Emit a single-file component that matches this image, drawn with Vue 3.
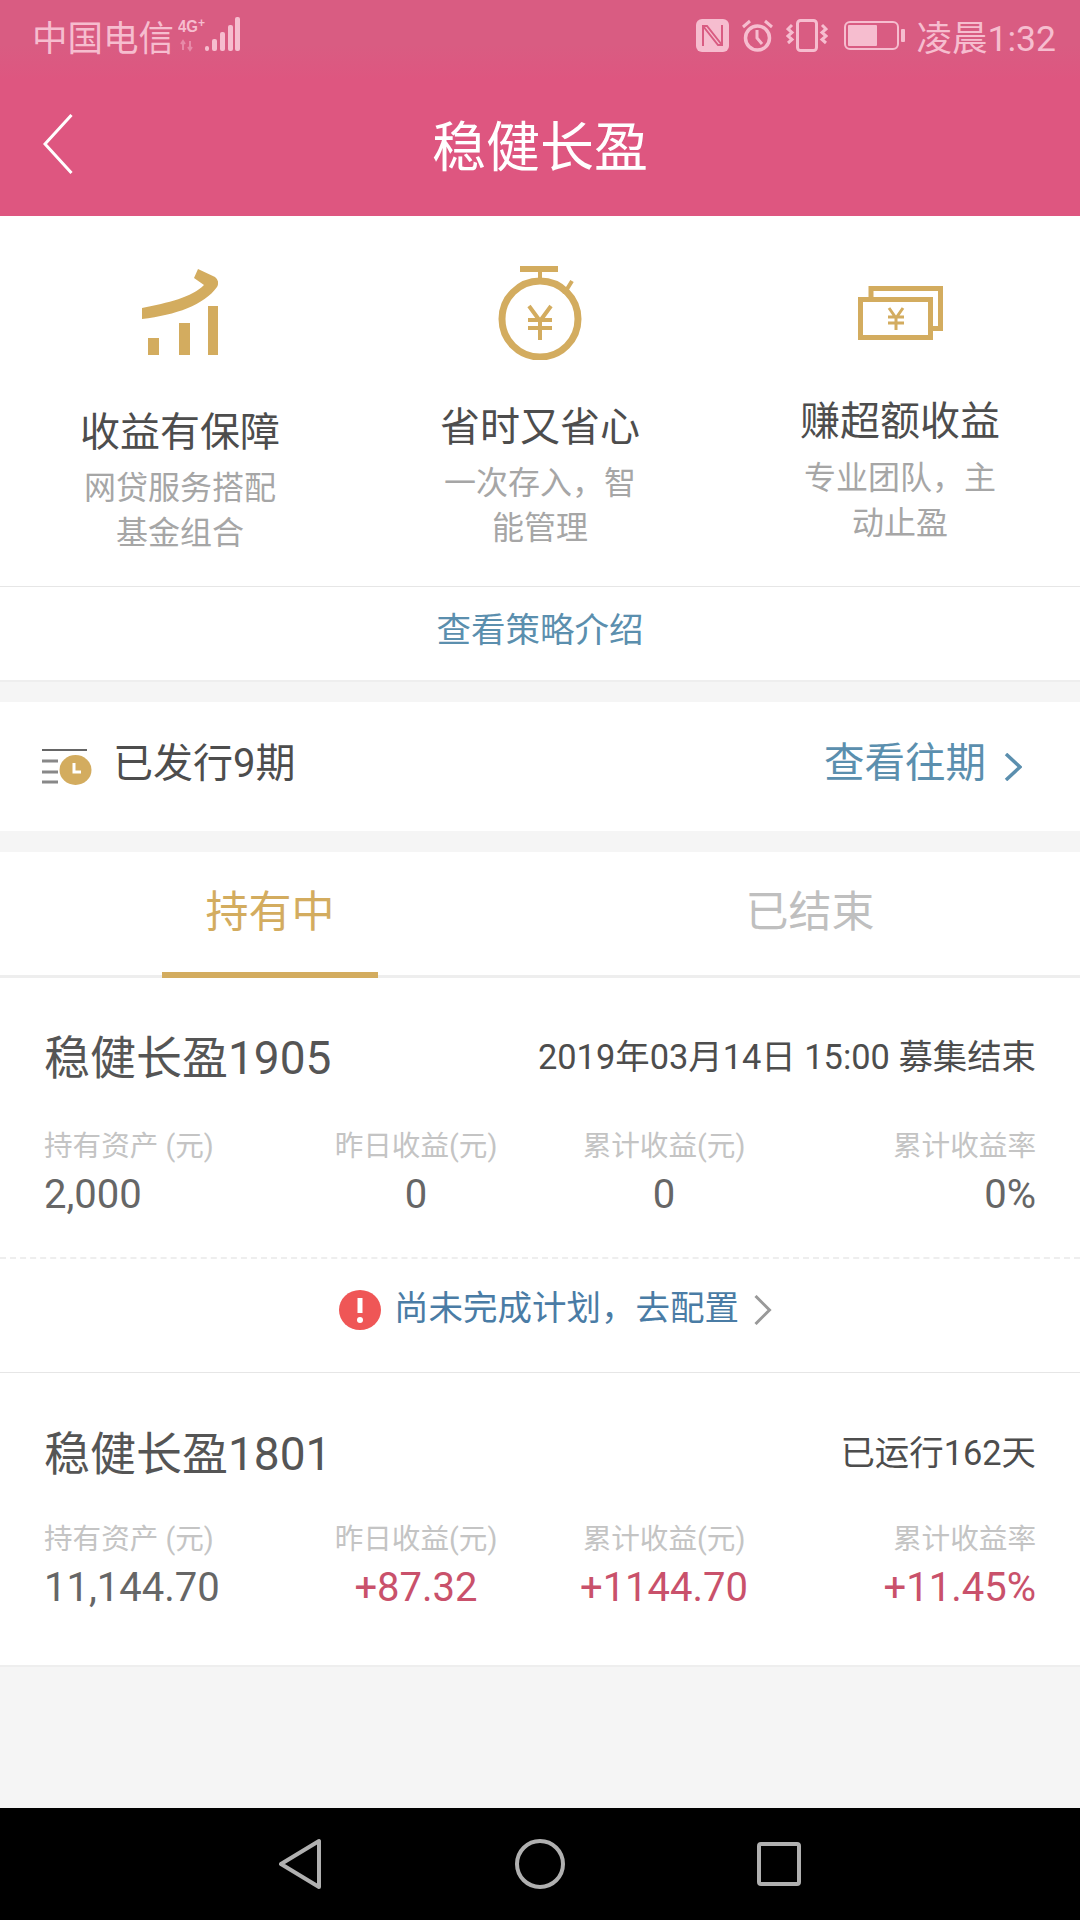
<template>
  <div class="page">
    <header class="top">
      <div class="status">
        <div class="status-left">
          <span class="carrier">中国电信</span>
          <svg class="signal" width="62" height="36" viewBox="0 0 62 36">
            <text x="0" y="15" class="net" textLength="20" lengthAdjust="spacingAndGlyphs">4G</text>
            <text x="20" y="10" class="net-plus">+</text>
            <path d="M5 24v9M3 27l2-3 2 3M12 33v-9M10 30l2 3 2-3" stroke="#e78aa8" stroke-width="2" fill="none" />
            <rect x="27" y="29" width="4" height="5" rx="2" fill="#f6bdcf" />
            <rect x="34" y="22" width="5" height="12" rx="2" fill="#f6bdcf" />
            <rect x="42" y="15" width="5" height="19" rx="2" fill="#f6bdcf" />
            <rect x="50" y="8" width="5" height="26" rx="2" fill="#f6bdcf" />
            <rect x="57" y="0" width="5" height="34" rx="2" fill="#f6bdcf" />
          </svg>
        </div>
        <div class="status-right">
          <svg width="33" height="33" viewBox="0 0 33 33">
            <rect width="33" height="33" rx="6" fill="#f6bdcf" />
            <path d="M7 27V7h4l15 19M26 6v20h-4L7 7" stroke="#d95c82" stroke-width="2" fill="none" />
          </svg>
          <svg width="33" height="33" viewBox="0 0 33 33" fill="none" stroke="#f6bdcf" stroke-width="3.500">
            <circle cx="16.500" cy="19" r="12" />
            <path d="M16 11v8l5 6" stroke-width="3" />
            <path d="M2 8l7-6M31 8l-7-6" stroke-width="3" />
          </svg>
          <svg width="42" height="33" viewBox="0 0 42 33" fill="none" stroke="#f6bdcf" stroke-width="3">
            <rect x="11.500" y="1.500" width="19" height="30" rx="3" />
            <path d="M6 6L2 10l4 3.500L2 17l4 3.500L2 24M36 6l4 4-4 3.500 4 3.500-4 3.500 4 3.500" />
          </svg>
          <svg class="battery" width="61" height="29" viewBox="0 0 61 29">
            <rect x="1" y="1" width="53" height="27" rx="5" fill="none" stroke="#f6bdcf" stroke-width="2" />
            <rect x="4" y="4" width="29" height="21" rx="1" fill="#f6bdcf" />
            <rect x="57" y="8" width="4" height="13" rx="1" fill="#f6bdcf" />
          </svg>
          <span class="clock">凌晨1:32</span>
        </div>
      </div>
      <div class="nav">
        <svg class="back" width="30" height="60" viewBox="0 0 30 60" fill="none" stroke="#fff" stroke-width="3">
          <path d="M28.500 1L2 30l26.500 29" />
        </svg>
        <span class="nav-title">稳健长盈</span>
      </div>
    </header>

    <section class="intro">
      <div class="features">
        <div class="feature f1">
          <svg width="76" height="86" viewBox="0 0 76 86" fill="#d3ac5f">
            <path d="M0 39C26 34 50 28 62 16L52 9 56 0 73 8Q78 12 75 18C62 36 34 46 0 50z" />
            <rect x="6" y="69" width="11" height="17" />
            <rect x="37" y="54" width="11" height="32" />
            <rect x="66" y="37" width="10" height="49" />
          </svg>
          <h3>收益有保障</h3>
          <p>网贷服务搭配<br />基金组合</p>
        </div>
        <div class="feature f2">
          <svg width="84" height="94" viewBox="0 0 84 94" fill="none" stroke="#d3ac5f">
            <path d="M22 3h38" stroke-width="6" />
            <path d="M42 3v11M66 28l8-13" stroke-width="4" />
            <circle cx="42" cy="53" r="38" stroke-width="7" />
            <path d="M31 40l11 15 11-15M30 54h24M30 62h24M42 54v20" stroke-width="4" />
          </svg>
          <h3>省时又省心</h3>
          <p>一次存入，智<br />能管理</p>
        </div>
        <div class="feature f3">
          <svg width="85" height="54" viewBox="0 0 85 54" fill="none" stroke="#d3ac5f" stroke-width="5">
            <path d="M13 11V2.500h69.500v40H73" />
            <rect x="2.500" y="13.500" width="70" height="38" />
            <path d="M31 22l7 10 7-10M30 31h16M30 37h16M38 32v12" stroke-width="3" />
          </svg>
          <h3>赚超额收益</h3>
          <p>专业团队，主<br />动止盈</p>
        </div>
      </div>
      <div class="strategy">查看策略介绍</div>
    </section>

    <section class="issue">
      <div class="issue-left">
        <svg width="50" height="38" viewBox="0 0 50 38">
          <path d="M0 2h45" stroke="#666" stroke-width="2" fill="none" />
          <path d="M0 13h16M0 24h16M0 34h16" stroke="#888" stroke-width="3" fill="none" />
          <ellipse cx="33.500" cy="22" rx="16" ry="15" fill="#d3ac5f" />
          <path d="M32 15v9h7" stroke="#fff" stroke-width="3" fill="none" />
        </svg>
        <span>已发行9期</span>
      </div>
      <div class="issue-right">
        <span>查看往期</span>
        <svg width="18" height="28" viewBox="0 0 18 28" fill="none" stroke="#5b8fae" stroke-width="3.500">
          <path d="M2 1l14 13L2 27" />
        </svg>
      </div>
    </section>

    <div class="tabs">
      <div class="tab active"><span>持有中</span></div>
      <div class="tab"><span>已结束</span></div>
    </div>

    <section class="list">
      <div class="plan first">
        <div class="plan-head">
          <span class="plan-name">稳健长盈1905</span>
          <span class="plan-note">2019年03月14日 15:00 募集结束</span>
        </div>
        <div class="stats">
          <div class="stat" v-for="item in holding" :key="item.label">
            <div class="stat-label">{{ item.label }}</div>
            <div class="stat-value">{{ item.value }}</div>
          </div>
        </div>
      </div>
      <div class="alert">
        <svg class="alert-icon" width="42" height="40" viewBox="0 0 42 40">
          <ellipse cx="21" cy="20" rx="21" ry="20" fill="#ef5656" />
          <path d="M21 8v15" stroke="#fff" stroke-width="5" />
          <circle cx="21" cy="30" r="3" fill="#fff" />
        </svg>
        <span>尚未完成计划，去配置</span>
        <svg width="18" height="30" viewBox="0 0 18 30" fill="none" stroke="#999" stroke-width="3">
          <path d="M1.500 1l14 14-14 14" />
        </svg>
      </div>
      <div class="plan second">
        <div class="plan-head">
          <span class="plan-name">稳健长盈1801</span>
          <span class="plan-note">已运行162天</span>
        </div>
        <div class="stats">
          <div class="stat" v-for="item in running" :key="item.label">
            <div class="stat-label">{{ item.label }}</div>
            <div class="stat-value" :class="{ up: item.up }">{{ item.value }}</div>
          </div>
        </div>
      </div>
    </section>

    <div class="fill"></div>

    <footer class="sysbar">
      <svg width="44" height="52" viewBox="0 0 44 52" fill="none" stroke="#b0b0b0" stroke-width="4" stroke-linejoin="round">
        <path d="M40 3v46L2 26z" />
      </svg>
      <svg width="50" height="50" viewBox="0 0 50 50" fill="none" stroke="#b0b0b0" stroke-width="4">
        <circle cx="25" cy="25" r="23" />
      </svg>
      <svg width="44" height="46" viewBox="0 0 44 46" fill="none" stroke="#b0b0b0" stroke-width="4" stroke-linejoin="round">
        <rect x="2" y="3" width="40" height="40" rx="2" />
      </svg>
    </footer>
  </div>
</template>

<script setup>
const holding = [
  { label: '持有资产 (元)', value: '2,000' },
  { label: '昨日收益(元)', value: '0' },
  { label: '累计收益(元)', value: '0' },
  { label: '累计收益率', value: '0%' },
]

const running = [
  { label: '持有资产 (元)', value: '11,144.70' },
  { label: '昨日收益(元)', value: '+87.32', up: true },
  { label: '累计收益(元)', value: '+1144.70', up: true },
  { label: '累计收益率', value: '+11.45%', up: true },
]
</script>

<style>
html,
body {
  margin: 0;
  background: #f5f5f5;
}
</style>

<style scoped>
.page {
  width: 1080px;
  height: 1920px;
  display: flex;
  flex-direction: column;
  background: #f5f5f5;
  font-family: Roboto, "Noto Sans CJK SC", sans-serif;
  color: #555;
}

.top {
  height: 216px;
  background: linear-gradient(#d95c82 0, #d95c82 45px, #de5680 80px);
  flex: none;
}
.status {
  height: 70px;
  display: flex;
  justify-content: space-between;
  align-items: center;
  color: #f6bdcf;
  padding: 0 24px 0 32px;
}
.status-left,
.status-right {
  display: flex;
  align-items: center;
}
.carrier {
  font-size: 35.500px;
}
.signal {
  margin-left: 4px;
}
.net {
  font: bold 17px "Liberation Sans", sans-serif;
  fill: #f6bdcf;
}
.net-plus {
  font: bold 12px "Liberation Sans", sans-serif;
  fill: #f6bdcf;
}
.status-right {
  gap: 12px;
}
.battery {
  margin-left: 4px;
}
.clock {
  font-size: 35.500px;
}
.nav {
  height: 146px;
  display: flex;
  align-items: center;
  justify-content: center;
  position: relative;
}
.back {
  position: absolute;
  left: 43px;
  top: 44px;
}
.nav-title {
  font-size: 54px;
  color: #fff;
}

.intro {
  background: #fff;
  height: 466px;
  flex: none;
  border-bottom: 2px solid #eee;
  box-sizing: border-box;
}
.features {
  display: grid;
  grid-template-columns: repeat(3, 1fr);
  height: 371px;
  border-bottom: 1px solid #e6e6e6;
  box-sizing: border-box;
}
.feature {
  display: flex;
  flex-direction: column;
  align-items: center;
}
.feature h3 {
  margin: 0;
  font-size: 40px;
  font-weight: 400;
  line-height: 56px;
  color: #4d4d4d;
}
.feature p {
  margin: 0;
  font-size: 32px;
  line-height: 45px;
  color: #a6a6a6;
  text-align: center;
}
.f1 {
  padding-top: 53px;
}
.f1 h3 {
  margin-top: 50px;
}
.f1 p {
  margin-top: 5px;
}
.f2 {
  padding-top: 50px;
}
.f2 h3 {
  margin-top: 40px;
}
.f2 p {
  margin-top: 5px;
}
.f3 {
  padding-top: 70px;
}
.f3 h3 {
  margin-top: 54px;
}
.f3 p {
  margin-top: 6px;
}
.strategy {
  height: 93px;
  display: flex;
  align-items: center;
  justify-content: center;
  font-size: 34.500px;
  color: #5b8fae;
  padding-bottom: 13px;
  box-sizing: border-box;
}

.issue {
  margin-top: 20px;
  height: 129px;
  flex: none;
  background: #fff;
  display: flex;
  align-items: center;
  justify-content: space-between;
  padding: 0 58px 0 42px;
  box-sizing: border-box;
}
.issue-left,
.issue-right {
  display: flex;
  align-items: center;
  font-size: 40.500px;
}
.issue-left span,
.issue-right span {
  padding-bottom: 14px;
}
.issue-left {
  gap: 21px;
  color: #4d4d4d;
  font-size: 40px;
}
.issue-right {
  color: #5b8fae;
  gap: 18px;
}

.tabs {
  margin-top: 21px;
  height: 126px;
  flex: none;
  background: #fff;
  display: grid;
  grid-template-columns: 1fr 1fr;
  border-bottom: 3px solid #eee;
  box-sizing: border-box;
}
.tab {
  display: flex;
  justify-content: center;
  font-size: 43px;
  color: #bfbfbf;
}
.tab span {
  width: 216px;
  text-align: center;
  line-height: 120px;
  height: 120px;
}
.tab.active {
  color: #d3ac5f;
}
.tab.active span {
  border-bottom: 6px solid #d3ac5f;
}

.list {
  background: #fff;
  flex: none;
  border-bottom: 2px solid #eee;
}
.plan {
  padding: 0 44px;
  box-sizing: border-box;
}
.plan.first {
  height: 281px;
  border-bottom: 2px dashed #eee;
}
.plan.second {
  height: 292px;
}
.plan-head {
  display: flex;
  justify-content: space-between;
  align-items: center;
  height: 148px;
  padding-top: 4px;
  box-sizing: border-box;
}
.plan.second .plan-head {
  height: 146px;
  padding-top: 8px;
}
.plan-name {
  font-size: 46px;
  color: #555;
}
.plan-note {
  font-size: 34.400px;
  color: #4d4d4d;
}
.stats {
  display: grid;
  grid-template-columns: repeat(4, 1fr);
}
.stat {
  text-align: center;
}
.stat:first-child {
  text-align: left;
}
.stat:last-child {
  text-align: right;
}
.stat-label {
  font-size: 28.600px;
  line-height: 40px;
  color: #c4c4c4;
  white-space: nowrap;
}
.stat-value {
  font-size: 40px;
  line-height: 58px;
  color: #666;
}
.stat-value.up {
  color: #c9516b;
}
.alert {
  height: 114px;
  display: flex;
  align-items: center;
  justify-content: center;
  gap: 15px;
  font-size: 34.500px;
  color: #4a7ca5;
  border-bottom: 1px solid #e6e6e6;
  box-sizing: border-box;
  padding: 0 0 12px 31px;
}
.alert-icon {
  margin-right: -2px;
}
.alert span {
  padding-bottom: 10px;
}

.fill {
  flex: 1;
}
.sysbar {
  height: 112px;
  flex: none;
  background: #000;
  display: flex;
  align-items: center;
  justify-content: center;
  gap: 192px;
}
</style>
